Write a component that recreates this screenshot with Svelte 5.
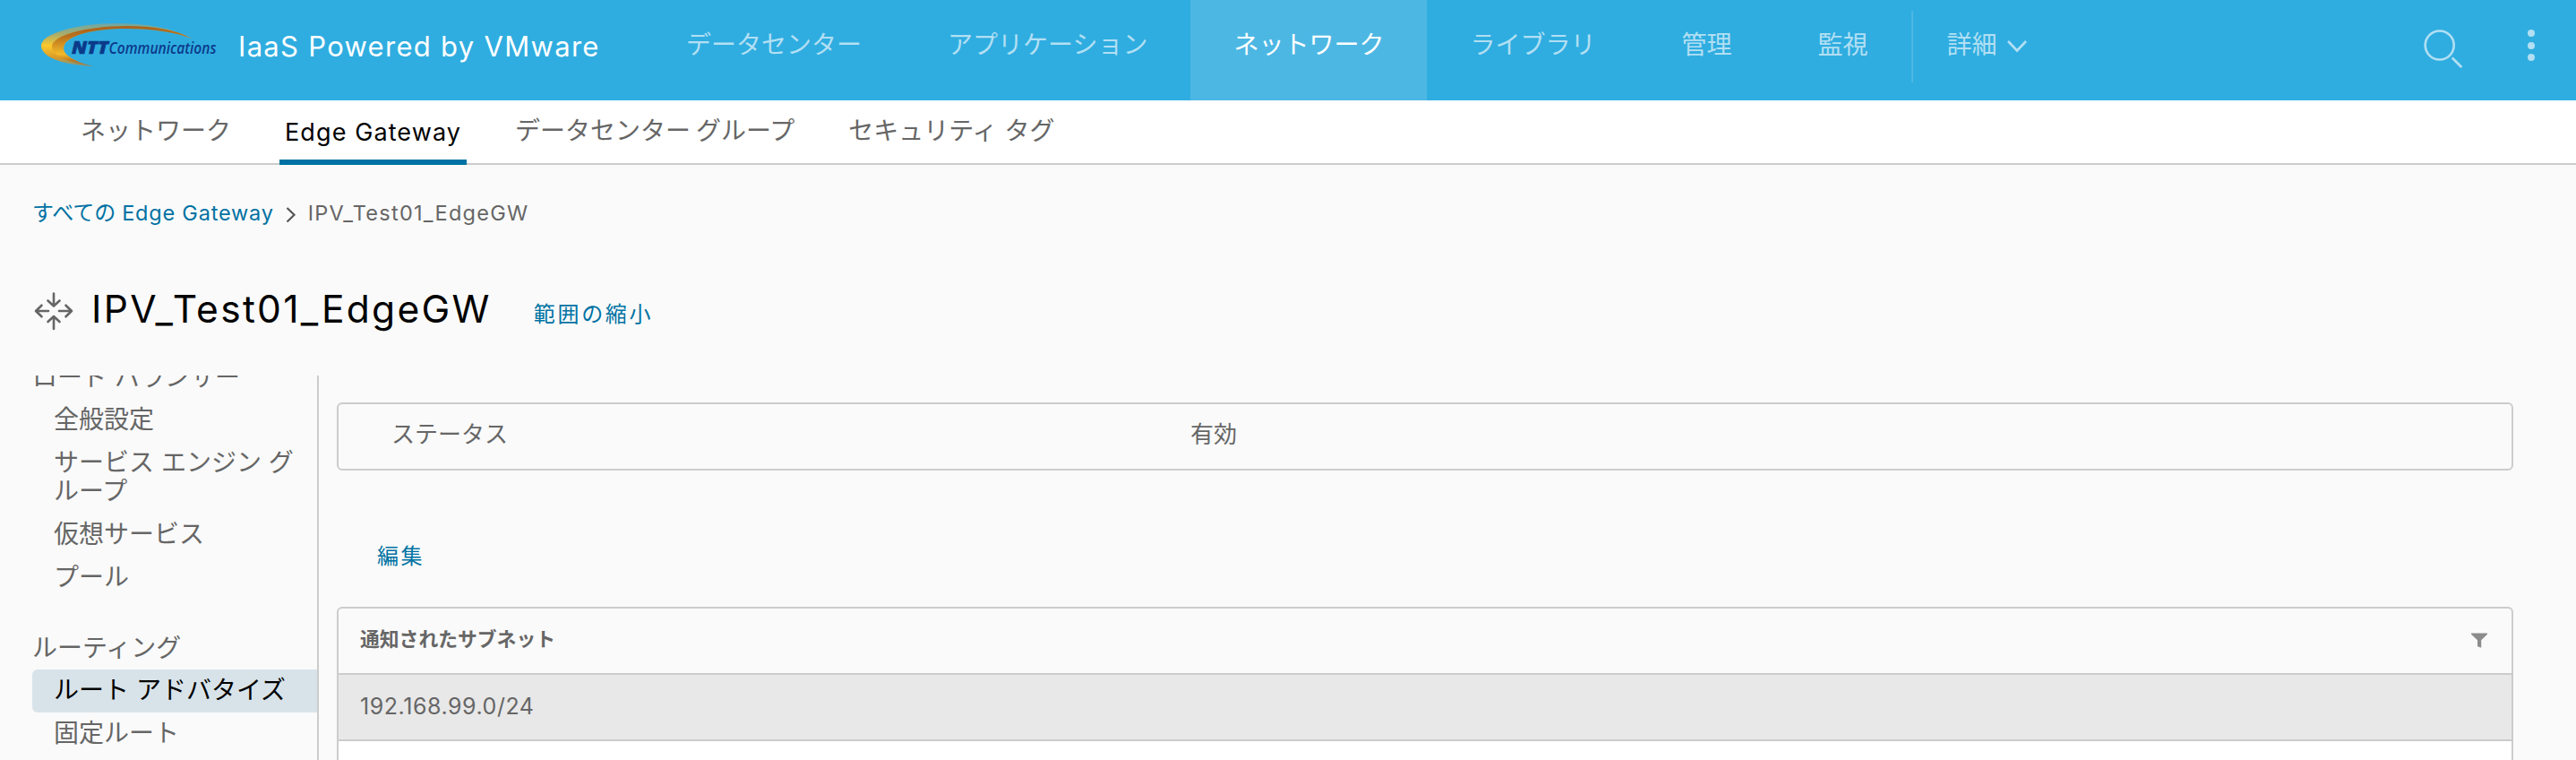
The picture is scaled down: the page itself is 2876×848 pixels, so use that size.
<script>
  const nav = [
    { label: 'データセンター' },
    { label: 'アプリケーション' },
    { label: 'ネットワーク', active: true },
    { label: 'ライブラリ' },
    { label: '管理' },
    { label: '監視' }
  ];
  const tabs = [
    { label: 'ネットワーク' },
    { label: 'Edge Gateway', active: true },
    { label: 'データセンター グループ' },
    { label: 'セキュリティ タグ' }
  ];
  const groups = [
    { title: 'ロード バランサー', items: ['全般設定', 'サービス エンジン グループ', '仮想サービス', 'プール'] },
    { title: 'ルーティング', items: ['ルート アドバタイズ', '固定ルート'] }
  ];
  const current = 'ルート アドバタイズ';
  const subnets = ['192.168.99.0/24'];
</script>

<div class="page">
  <header>
    <div class="brand">
      <svg class="logo" viewBox="0 0 204 52" width="204" height="52" role="img" aria-label="NTT Communications">
        <defs>
          <linearGradient id="outer" x1="0" y1="0" x2="0" y2="1">
            <stop offset="0" stop-color="#6aa8a8" />
            <stop offset="0.25" stop-color="#a8ac6c" />
            <stop offset="0.52" stop-color="#fac92c" />
            <stop offset="0.8" stop-color="#d99a28" />
            <stop offset="1" stop-color="#6f9a94" />
          </linearGradient>
          <linearGradient id="inner" x1="0" y1="0" x2="0" y2="1">
            <stop offset="0" stop-color="#a8641c" />
            <stop offset="0.25" stop-color="#b9701c" />
            <stop offset="0.7" stop-color="#f2ba2a" />
            <stop offset="0.85" stop-color="#c07a20" />
            <stop offset="1" stop-color="#85836a" />
          </linearGradient>
        </defs>
        <path fill="url(#outer)" d="M170 19C148 7 118 2 86 2C40 2 2 14 2 27C2 40 28 49 60 50C40 45 27 38 27 30C27 16 58 8 98 8C128 8 152 12 170 19Z" />
        <path fill="url(#inner)" d="M170 19C152 9 126 5 98 5C50 5 14 16 14 28C14 38 34 47 60 50C40 45 27 38 27 30C27 16 58 8 98 8C128 8 152 12 170 19Z" />
        <text class="ntt" x="36" y="36" font-size="19" textLength="41" lengthAdjust="spacingAndGlyphs">NTT</text>
        <text class="com" x="77.5" y="36" font-size="17.5" textLength="120" lengthAdjust="spacingAndGlyphs">Communications</text>
      </svg>
      <span class="product">IaaS Powered by VMware</span>
    </div>
    <nav>
      {#each nav as item}
        <a class:active={item.active}>{item.label}</a>
      {/each}
      <div class="more">
        <span>詳細</span>
        <svg width="24" height="16" viewBox="0 0 24 16"><path d="M2 2L12 12.5L22 2" fill="none" stroke="currentColor" stroke-width="2.6" /></svg>
      </div>
    </nav>
    <div class="tools">
      <svg width="44" height="44" viewBox="0 0 44 44">
        <circle cx="18.7" cy="18.5" r="16" fill="none" stroke="currentColor" stroke-width="2.6" />
        <path d="M33.5 33.3L42.5 42.3" stroke="currentColor" stroke-width="2.8" stroke-linecap="round" />
      </svg>
      <svg width="8" height="36" viewBox="0 0 8 36" fill="currentColor">
        <circle cx="4" cy="4" r="4" /><circle cx="4" cy="18" r="4" /><circle cx="4" cy="31" r="4" />
      </svg>
    </div>
  </header>

  <div class="tabs">
    {#each tabs as tab}
      <a class:active={tab.active}>{tab.label}</a>
    {/each}
  </div>

  <div class="crumbs">
    <a>すべての <span>Edge Gateway</span></a>
    <svg width="12" height="20" viewBox="0 0 12 20"><path d="M1.5 2L9.5 9.8L1.5 17.5" fill="none" stroke="#565656" stroke-width="2.2" /></svg>
    <span class="here">IPV_Test01_EdgeGW</span>
  </div>

  <div class="title">
    <svg width="44" height="44" viewBox="0 0 44 44" fill="none" stroke="#666" stroke-width="2.6" stroke-linecap="round" stroke-linejoin="round">
      <path d="M22 2.500V16M15.500 10.500L22 16.500L28.500 10.500" />
      <path d="M22 42V28M15.500 34L22 28L28.500 34" />
      <path d="M16 22H2.500M8.500 15.700L2 22L8.500 28.300" />
      <path d="M28 22H41.500M35.500 15.700L42 22L35.500 28.300" />
    </svg>
    <h1>IPV_Test01_EdgeGW</h1>
    <a>範囲の縮小</a>
  </div>

  <div class="body">
    <aside>
      <div class="menu">
        {#each groups as group}
          <section>
            <h2>{group.title}</h2>
            {#each group.items as item}
              <a class:current={item === current}>{item}</a>
            {/each}
          </section>
        {/each}
      </div>
    </aside>
    <main>
      <div class="status">
        <span class="name">ステータス</span>
        <span>有効</span>
      </div>
      <button>編集</button>
      <div class="grid">
        <div class="head">
          <span>通知されたサブネット</span>
          <svg width="18" height="17" viewBox="0 0 18 17"><path fill="#8c8c8c" d="M0 0.5H18V1.8L11.2 8.3V16.7L7 15.2V8.3L0 1.8Z" /></svg>
        </div>
        {#each subnets as subnet}
          <div class="row">{subnet}</div>
        {/each}
        <div class="rest"></div>
      </div>
    </main>
  </div>
</div>

<style>
  :global(body) {
    background: #fafafa;
  }
  .page {
    box-sizing: border-box;
    width: 100%;
    height: 848px;
    overflow: hidden;
    display: flex;
    flex-direction: column;
    background: #fafafa;
    color: #666;
    font-family: Inter, 'Noto Sans CJK JP', sans-serif;
    font-size: 28px;
    white-space: nowrap;
  }
  svg {
    display: block;
    flex: none;
  }
  header {
    flex: none;
    height: 112px;
    display: flex;
    background: #2fade0;
    color: #b2dff3;
  }
  .brand {
    width: 718px;
    flex: none;
    display: flex;
    align-items: flex-start;
  }
  .logo {
    margin: 24px 0 0 44px;
    overflow: visible;
  }
  .logo text {
    font-family: 'Open Sans', sans-serif;
    font-style: italic;
    fill: #0b3a8a;
  }
  .logo .ntt {
    font-weight: 800;
    stroke: #0b3a8a;
    stroke-width: 0.6px;
  }
  .logo .com {
    font-weight: 600;
  }
  .product {
    margin: 32px 0 0 18px;
    color: #fff;
    font-size: 31px;
    line-height: 40px;
    letter-spacing: 1.3px;
  }
  nav {
    display: flex;
  }
  nav > a {
    padding: 0 48px;
    line-height: 100px;
  }
  nav > a.active {
    background: #4db7e3;
    color: #fff;
  }
  .more {
    display: flex;
    align-items: center;
    gap: 10px;
    height: 80px;
    margin-top: 12px;
    border-left: 2px solid #4db7e3;
    padding-left: 38px;
    line-height: 76px;
  }
  .more span {
    height: 80px;
  }
  .tools {
    margin-left: auto;
    display: flex;
    align-items: flex-start;
    gap: 73px;
    padding: 32px 46px 0 0;
  }
  .tools svg + svg {
    margin-top: 1px;
  }
  .tabs {
    flex: none;
    box-sizing: border-box;
    height: 72px;
    display: flex;
    gap: 48px;
    padding-left: 84px;
    background: #fff;
    border-bottom: 2px solid #ccc;
  }
  .tabs a {
    box-sizing: border-box;
    height: 72px;
    padding: 0 6px;
    line-height: 69px;
  }
  .tabs a:nth-child(3) {
    word-spacing: -2px;
  }
  .tabs a.active {
    color: #000;
    font-size: 27px;
    line-height: 71px;
    letter-spacing: 1.1px;
    border-bottom: 6px solid #0072a3;
  }
  .crumbs {
    flex: none;
    height: 110px;
    box-sizing: border-box;
    padding: 38px 0 0 36px;
    display: flex;
    align-items: flex-start;
    gap: 13px;
    font-size: 24px;
    line-height: 32px;
  }
  .crumbs a {
    color: #0072a3;
  }
  .crumbs a span {
    font-size: 23.5px;
    letter-spacing: 0.8px;
  }
  .here {
    font-size: 23.5px;
    letter-spacing: 1.25px;
  }
  .crumbs svg {
    margin-top: 8px;
  }
  .title {
    flex: none;
    height: 125px;
    display: flex;
    align-items: flex-start;
    padding-left: 38px;
  }
  .title svg {
    margin-top: 31px;
  }
  h1 {
    margin: 23px 0 0 20px;
    font-size: 42.5px;
    line-height: 56px;
    font-weight: 400;
    color: #000;
    letter-spacing: 2.3px;
  }
  .title a {
    margin: 41px 0 0 47px;
    color: #0072a3;
    font-size: 24px;
    line-height: 32px;
    letter-spacing: 2.7px;
  }
  .body {
    flex: 1;
    min-height: 0;
    display: flex;
  }
  aside {
    box-sizing: border-box;
    width: 356px;
    flex: none;
    overflow: hidden;
    padding-left: 36px;
    border-right: 2px solid #ccc;
  }
  .menu {
    margin-top: -22px;
    display: flex;
    flex-direction: column;
    gap: 30px;
  }
  section {
    display: flex;
    flex-direction: column;
  }
  h2 {
    margin: 0;
    font-size: 28px;
    font-weight: 400;
    line-height: 48px;
  }
  section a {
    padding: 7px 24px 9px;
    line-height: 32px;
    white-space: normal;
    word-break: break-all;
  }
  section a.current {
    background: #d8e3e9;
    color: #000;
    border-radius: 6px 0 0 6px;
  }
  main {
    width: 2430px;
    margin-left: 20px;
    display: flex;
    flex-direction: column;
    align-items: stretch;
  }
  .status {
    box-sizing: border-box;
    flex: none;
    height: 76px;
    margin-top: 30px;
    border: 2px solid #ccc;
    border-radius: 6px;
    display: flex;
    padding-left: 59px;
    font-size: 26px;
    line-height: 68px;
  }
  .name {
    width: 892px;
  }
  button {
    align-self: flex-start;
    margin: 76px 0 0 45px;
    height: 40px;
    padding: 0;
    border: 0;
    background: none;
    color: #0072a3;
    font: 24px/40px Inter, 'Noto Sans CJK JP', sans-serif;
    letter-spacing: 2.6px;
  }
  .grid {
    flex: 1;
    margin-top: 36px;
    display: flex;
    flex-direction: column;
    border: 2px solid #ccc;
    border-bottom: 0;
    border-radius: 6px 6px 0 0;
  }
  .head {
    display: flex;
    justify-content: space-between;
    height: 72px;
    padding: 0 27px 0 24px;
    font-size: 21.8px;
    font-weight: 700;
    line-height: 68px;
    border-bottom: 2px solid #ccc;
  }
  .head svg {
    margin-top: 27px;
  }
  .row {
    height: 72px;
    padding-left: 24px;
    background: #e8e8e8;
    border-bottom: 2px solid #ccc;
    font-size: 25px;
    line-height: 70px;
    letter-spacing: 0.55px;
  }
  .rest {
    flex: 1;
    background: #fff;
  }
</style>
